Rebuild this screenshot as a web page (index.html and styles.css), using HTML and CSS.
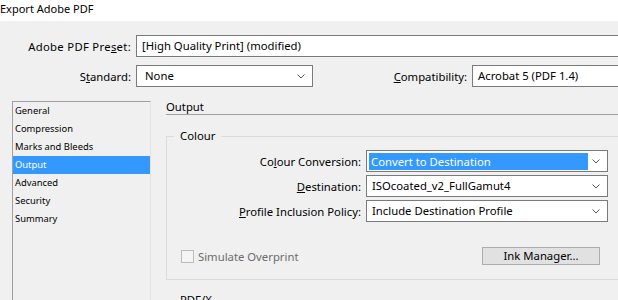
FILE: index.html
```html
<!DOCTYPE html>
<html>
<head>
<meta charset="utf-8">
<link rel="stylesheet" href="styles.css">
</head>
<body>
<div class="titlebar">Export Adobe PDF</div>
<div class="dialog">
  <div class="top">
    <div class="row">
      <span class="lbl lbl-preset">Adobe PDF Pre<u>s</u>et:</span>
      <div class="field preset">[High Quality Print] (modified)</div>
    </div>
    <div class="row row2">
      <span class="lbl">S<u>t</u>andard:</span>
      <div class="field select std"><span class="val">None</span><svg class="chev" width="8" height="5" viewBox="0 0 8 5"><polyline points="0.5,0.5 4,4 7.5,0.5" fill="none" stroke="#5a5a5a" stroke-width="1"/></svg></div>
      <span class="lbl compat-lbl"><u>C</u>ompatibility:</span>
      <div class="field compat">Acrobat 5 (PDF 1.4)</div>
    </div>
  </div>
  <div class="main">
    <ul class="nav">
      <li>General</li>
      <li>Compression</li>
      <li>Marks and Bleeds</li>
      <li class="sel">Output</li>
      <li>Advanced</li>
      <li>Security</li>
      <li>Summary</li>
    </ul>
    <div class="content">
      <div class="heading">Output</div>
      <fieldset class="group">
        <legend>Colour</legend>
        <div class="form">
          <div class="frow">
            <span class="flbl">Co<u>l</u>our Conversion:</span>
            <div class="field select wide"><span class="val hl">Convert to Destination</span><svg class="chev" width="8" height="5" viewBox="0 0 8 5"><polyline points="0.5,0.5 4,4 7.5,0.5" fill="none" stroke="#5a5a5a" stroke-width="1"/></svg></div>
          </div>
          <div class="frow">
            <span class="flbl"><u>D</u>estination:</span>
            <div class="field select wide"><span class="val">ISOcoated_v2_FullGamut4</span><svg class="chev" width="8" height="5" viewBox="0 0 8 5"><polyline points="0.5,0.5 4,4 7.5,0.5" fill="none" stroke="#5a5a5a" stroke-width="1"/></svg></div>
          </div>
          <div class="frow">
            <span class="flbl"><u>P</u>rofile Inclusion Policy:</span>
            <div class="field select wide"><span class="val">Include Destination Profile</span><svg class="chev" width="8" height="5" viewBox="0 0 8 5"><polyline points="0.5,0.5 4,4 7.5,0.5" fill="none" stroke="#5a5a5a" stroke-width="1"/></svg></div>
          </div>
        </div>
        <div class="actions">
          <label class="check"><span class="box"></span><span class="ctext">Simulate Overprint</span></label>
          <div class="btn">Ink Manager...</div>
        </div>
      </fieldset>
      <fieldset class="group group2">
        <legend>PDF/X</legend>
      </fieldset>
    </div>
  </div>
</div>
</body>
</html>
```

FILE: styles.css
```css
* { box-sizing: border-box; }
html, body {
  margin: 0;
  padding: 0;
  width: 618px;
  height: 300px;
  overflow: hidden;
  font-family: "Noto Sans", "Open Sans", sans-serif;
  font-size: 11.3px;
  color: #000;
}
.titlebar {
  height: 21px;
  background: #fff;
  line-height: 18px;
  padding-left: 0;
  font-size: 11px;
  color: #000;
}
.dialog {
  background: #f0f0f0;
  height: 279px;
  width: 618px;
  overflow: hidden;
}
.top {
  padding-top: 14px;
}
.row {
  display: flex;
  align-items: center;
  height: 22px;
  white-space: nowrap;
}
.row2 {
  margin-top: 8px;
}
.lbl {
  width: 131px;
  text-align: right;
  margin-right: 5px;
  flex: none;
}
.lbl-preset {
  letter-spacing: 0.3px;
}
.field {
  height: 22px;
  border: 1px solid #7a7a7a;
  background: #fff;
  display: flex;
  align-items: center;
  padding-left: 5px;
  flex: none;
  white-space: nowrap;
  line-height: 20px;
}
.preset { width: 520px; }
.std { width: 177px; }
.compat-lbl { width: 154px; }
.compat { width: 200px; }
.select { justify-content: space-between; padding-right: 7px; }
.chev { flex: none; }
.main {
  display: flex;
  margin-top: 14px;
}
.nav {
  list-style: none;
  margin: 0 0 0 12px;
  padding: 0;
  width: 139px;
  height: 200px;
  flex: none;
  border-top: 1px solid #a0a0a0;
  border-left: 1px solid #a0a0a0;
  border-right: 1px solid #e3e3e3;
  font-size: 9.4px;
}
.nav li {
  height: 18px;
  line-height: 18px;
  padding-left: 2px;
  white-space: nowrap;
}
.nav li.sel {
  background: #3399ff;
  color: #fff;
}
.content {
  margin-left: 15px;
  width: 480px;
  flex: none;
}
.heading {
  height: 14px;
  line-height: 12px;
  border-bottom: 1px solid #a0a0a0;
  padding-left: 0;
}
.group {
  margin: 13px 0 0 0;
  padding: 0 0 14px 0;
  border: 1px solid #dcdcdc;
  width: 480px;
  min-width: 0;
}
.group legend {
  margin-left: 7px;
  padding: 0 6px;
  line-height: 16px;
}
.form {
  display: flex;
  flex-direction: column;
  gap: 3px;
  margin-top: 6px;
}
.frow {
  display: flex;
  align-items: center;
  white-space: nowrap;
}
.flbl {
  width: 194px;
  text-align: right;
  margin-right: 5px;
  flex: none;
}
.wide { width: 242px; padding-left: 2px; }
.val { padding-left: 3px; }
.val.hl {
  background: #3399ff;
  color: #fff;
  width: 219px;
  line-height: 17px;
  padding-left: 2px;
}
.actions {
  display: flex;
  align-items: center;
  justify-content: space-between;
  width: 433px;
  height: 18px;
  margin-top: 25px;
  padding-left: 14px;
}
.check {
  display: flex;
  align-items: center;
}
.box {
  width: 13px;
  height: 13px;
  border: 1px solid #bcbcbc;
  background: #f4f4f4;
  margin-right: 4px;
}
.ctext { color: #6d6d6d; }
.btn {
  width: 118px;
  height: 18px;
  line-height: 16px;
  border: 1px solid #adadad;
  background: #e1e1e1;
  text-align: center;
}
.group2 {
  margin-top: 12px;
  height: 40px;
  padding: 0;
}
```
